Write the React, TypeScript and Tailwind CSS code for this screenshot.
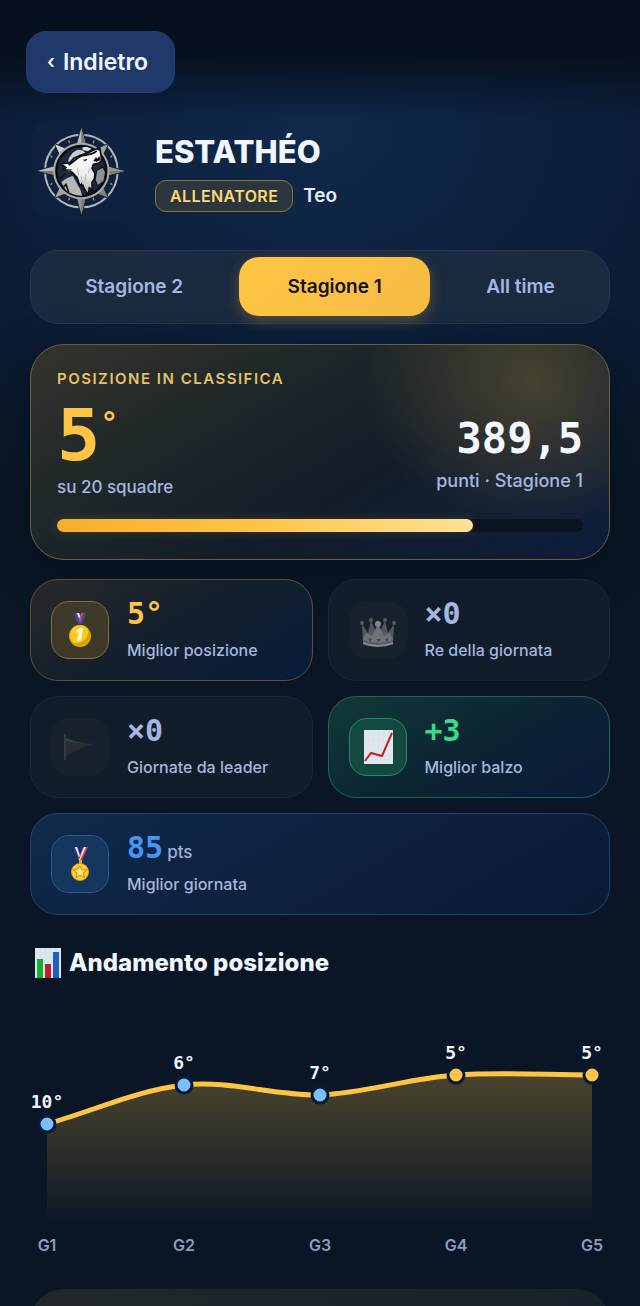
import { useState } from "react";
import type { ReactNode } from "react";
import clsx from "clsx";

const SEASONS = ["Stagione 2", "Stagione 1", "All time"];

type Tone = "gold" | "green" | "blue" | "off";

const cardTone: Record<Tone, string> = {
  gold: "border-[#5d512f] bg-linear-150 from-[#28292a] via-[#14202d] via-45% to-[#091b38]",
  green: "border-[#1f6557] bg-linear-150 from-[#103a3a] via-[#0d2433] via-50% to-[#0b1b38]",
  blue: "border-[#1e4479] bg-linear-150 from-[#11294a] via-[#0e213f] via-50% to-[#0b1a33]",
  off: "border-[#1b2733] bg-[#111d2a]",
};

const iconTone: Record<Tone, string> = {
  gold: "border-[#86703a] bg-[#3f3929]",
  green: "border-[#248a69] bg-[#14493f]",
  blue: "border-[#275a97] bg-[#17365f]",
  off: "border-[#17222e] bg-[#17222e]",
};

const valueTone: Record<Tone, string> = {
  gold: "text-[#ffc443]",
  green: "text-[#35dc8c]",
  blue: "text-[#4596f7]",
  off: "text-[#a6b6e0]",
};

function TeamLogo() {
  return (
    <svg viewBox="30 24 306 306" className="size-full" role="img" aria-label="Stemma ESTATHÉO">
      <defs>
        <linearGradient id="steel" x1="0" y1="0" x2="1" y2="1">
          <stop offset="0" stopColor="#dcdcd8" />
          <stop offset="0.5" stopColor="#a3a4a2" />
          <stop offset="1" stopColor="#77797b" />
        </linearGradient>
        <linearGradient id="fur" x1="0.5" y1="0" x2="0.5" y2="1">
          <stop offset="0" stopColor="#ffffff" />
          <stop offset="0.6" stopColor="#ececeb" />
          <stop offset="1" stopColor="#a9aaaa" />
        </linearGradient>
        <clipPath id="disc">
          <circle cx="184" cy="180" r="74" />
        </clipPath>
      </defs>
      <circle cx="184" cy="180" r="109" fill="none" stroke="#b4b6b5" strokeWidth="6" />
      <path
        d="M144 87l7 5-4 6zM224 87l-7 5 4 6zM90 133l8 2-3 7zM278 133l-8 2 3 7zM90 223l8-3-3-6zM278 223l-8-3 3-6zM144 270l7-5-4-6zM224 270l-7-5 4-6z"
        fill="#b29d62"
      />
      <g fill="url(#steel)" stroke="#14202f" strokeWidth="3">
        <path d="M102 97l48 20-26 26zM267 97l-48 20 26 26zM102 263l48-20-26-26zM267 263l-48-20 26-26z" />
        <path d="M184 46l16 58h-32zM184 315l16-59h-32zM49 179l59-16v32zM320 180l-60-16v32z" />
      </g>
      <path d="M184 50v54h14zM184 311v-55h14zM55 180h53v13zM314 180h-54v13z" fill="#777a7b" />
      <circle cx="184" cy="180" r="80" fill="#10151b" stroke="#a9aaa8" strokeWidth="9" />
      <circle cx="184" cy="180" r="75" fill="#1a2942" stroke="#080a0d" strokeWidth="7" />
      <g clipPath="url(#disc)">
        <path d="M147 141l11-16 14-9 16 2 9 9-17 8-23 16-13 1z" fill="#c9cbca" />
        <path d="M186 110l14-4 17 6-13 8-14-2z" fill="#dededd" />
        <path d="M230 178l19-10 8 16-5 26-19 15-8-18z" fill="#8d9192" stroke="#10151b" strokeWidth="4" />
        <path d="M124 214l12-10 22-10 22 40 8 24h-40z" fill="#b7b8b8" />
        <path d="M119 204l17-16M128 232l10-12 8 24" fill="none" stroke="#10151b" strokeWidth="5" />
      </g>
      <path
        d="M239 110l3 16 3 22-8 8-17 4-4 12 9 16-2 16-7 10 1 26-9-10-3 22-12-18-7-18-6 10-9-27-17-17-9-3-15-4 8-5-16-12 27-2 12-14 20-9 22-7 20-10z"
        fill="url(#fur)"
        stroke="#0b0e12"
        strokeWidth="5"
        strokeLinejoin="round"
      />
      <path d="M148 160c14-8 22-20 38-26 14-5 30-1 42-13" fill="none" stroke="#0b0e12" strokeWidth="6" strokeLinecap="round" />
      <path d="M134 175l23 0-8 9z" fill="#3c4146" />
      <path d="M188 146l15-2-7 7z" fill="#0b0e12" />
      <path d="M220 150l8-12 4 5 6-8 4 12-12 5z" fill="#0b0e12" />
      <path d="M230 116l9-6 2 11z" fill="#15191e" />
      <path d="M172 172l4 20M184 196l4 24M198 190l-3 22M209 172l-4 16" fill="none" stroke="#b3b5b6" strokeWidth="3" />
    </svg>
  );
}

function GoldMedal() {
  return (
    <svg viewBox="0 0 36 36" className="size-9" aria-hidden="true">
      <path d="M12 1h3l5 11h-4z" fill="#3b4db0" />
      <path d="M15 1h2l3 8-1 3z" fill="#f1f3fb" />
      <path d="M24 1h-3l-5 11h4z" fill="#3b4db0" />
      <path d="M21 1h-2l-2 6 1 4z" fill="#e34553" />
      <circle cx="18" cy="24" r="11" fill="#e0a70c" />
      <circle cx="18" cy="23" r="10" fill="#f8cb22" />
      <path d="M26 17a10 10 0 0 1-14 14 12 12 0 0 0 14-14z" fill="#dc9f08" />
      <path d="M14 19l4-3h3l-2 13h-4l2-9-3 1z" fill="#fff6ca" />
    </svg>
  );
}

function StarMedal() {
  return (
    <svg viewBox="0 0 36 36" className="size-9" aria-hidden="true">
      <path d="M11 1h5l4 13h-3z" fill="#28469b" />
      <path d="M13 1h2l4 12-1 1z" fill="#f5f5fb" />
      <path d="M26 1h-5l-5 13h4z" fill="#d84253" />
      <path d="M24 1h-2l-5 13h1z" fill="#f5f5fb" />
      <path d="M17 14h3v4h-3z" fill="#e7ae24" />
      <circle cx="18" cy="26" r="9" fill="#dba313" />
      <circle cx="18" cy="26" r="8" fill="#f8d03a" />
      <path d="M18 20l2 4 5 0-4 3 2 5-5-3-4 3 1-5-4-3 5-1z" fill="#ffe673" stroke="#c88b0b" strokeWidth="1" />
    </svg>
  );
}

function Crown() {
  return (
    <svg viewBox="0 0 36 36" className="size-9" aria-hidden="true">
      <g fill="#54585e">
        <path d="M3 31L2 12l6 9 3-12 5 11h4l5-11 3 12 6-9-1 19q-15 6-30 0z" />
        <circle cx="2" cy="11" r="2" />
        <circle cx="11" cy="8" r="2" />
        <circle cx="25" cy="8" r="2" />
        <circle cx="34" cy="11" r="2" />
      </g>
      <path d="M3 28l3-7 6 3 6-12 6 12 6-3 3 7q-15 6-30 0z" fill="#6f7378" />
      <circle cx="18" cy="12" r="3" fill="#83868b" />
      <path d="M3 31q15 6 30 0" stroke="#85888c" strokeWidth="2" fill="none" />
      <path d="M8 26l4 1-2 3zM16 27h5l-2 3zM25 27l4-1-2 4z" fill="#44484e" />
    </svg>
  );
}

function Flag() {
  return (
    <svg viewBox="0 0 36 36" className="size-9" aria-hidden="true">
      <path d="M3 5v26" stroke="#505458" strokeWidth="1" />
      <path d="M4 9q10 5 27 6-13 4-27 12z" fill="#2a2d30" />
      <path d="M4 9q10 5 27 6-14 0-27-3z" fill="#3c3f42" />
    </svg>
  );
}

function Rising() {
  return (
    <svg viewBox="0 0 36 36" className="size-9" aria-hidden="true">
      <path d="M4 1h29v34H4z" fill="#e1e7ee" />
      <path d="M9 1v34M14 1v34M19 1v34M24 1v34M29 1v34M4 6h29M4 11h29M4 16h29M4 21h29M4 26h29M4 31h29" stroke="#dae1ea" strokeWidth="1" />
      <path d="M5 32l6-8 11 3L32 4" fill="none" stroke="#c51e25" strokeWidth="2" />
    </svg>
  );
}

function Bars() {
  return (
    <svg viewBox="0 0 26 30" className="h-[30px] w-[26px]" aria-hidden="true">
      <path d="M0 0h26v30H0z" fill="#dee7f1" />
      <path d="M0 5h26M0 10h26M0 15h26M0 20h26M5 0v30M10 0v30M15 0v30M20 0v30" stroke="#d4deea" strokeWidth="1" />
      <path d="M2 11h6v19H2z" fill="#12b32a" />
      <path d="M10 16h6v14h-6z" fill="#b9202c" />
      <path d="M18 4h6v26h-6z" fill="#1d5fc4" />
    </svg>
  );
}

interface StatProps {
  tone: Tone;
  icon: ReactNode;
  value: string;
  unit?: string;
  label: string;
  wide?: boolean;
}

function StatCard({ tone, icon, value, unit, label, wide }: StatProps) {
  return (
    <div className={clsx("flex h-[102px] items-center gap-[18px] rounded-[28px] border px-5", cardTone[tone], wide && "col-span-2")}>
      <div className={clsx("flex size-[58px] shrink-0 items-center justify-center rounded-[18px] border", iconTone[tone])}>
        {icon}
      </div>
      <div className="min-w-0 pt-1">
        <p className={clsx("flex items-baseline font-['DejaVu_Sans_Mono',monospace] text-[30px] leading-9 font-bold", valueTone[tone])}>
          {value}
          {unit && <span className="ml-1 font-['Inter',sans-serif] text-[17px] leading-6 font-medium text-[#9fafd8]">{unit}</span>}
        </p>
        <p className="text-[16px] leading-9 font-medium whitespace-nowrap text-[#a6b6dc]">{label}</p>
      </div>
    </div>
  );
}

const points = [
  { x: 17, y: 125, pos: "10°", day: "G1" },
  { x: 154, y: 86, pos: "6°", day: "G2" },
  { x: 290, y: 96, pos: "7°", day: "G3" },
  { x: 426, y: 76, pos: "5°", day: "G4" },
  { x: 562, y: 76, pos: "5°", day: "G5" },
];

const LINE = "M17 125C63 112 108 91 154 86C199 81 245 97 290 96C335 94 381 79 426 76C471 73 517 76 562 76";

function PositionChart() {
  return (
    <svg viewBox="0 0 580 270" className="block h-auto w-full overflow-visible" role="img" aria-label="Andamento posizione">
      <defs>
        <linearGradient id="area" gradientUnits="userSpaceOnUse" x1="0" y1="72" x2="0" y2="222">
          <stop offset="0" stopColor="#ffc443" stopOpacity="0.27" />
          <stop offset="0.9" stopColor="#ffc443" stopOpacity="0.04" />
          <stop offset="1" stopColor="#ffc443" stopOpacity="0" />
        </linearGradient>
      </defs>
      <path d={`${LINE}V222H17Z`} fill="url(#area)" />
      <path d={LINE} fill="none" stroke="#ffc443" strokeWidth="5" />
      {points.map((p) => (
        <g key={p.day} textAnchor="middle">
          <circle cx={p.x} cy={p.y} r="8" fill={p.pos === "5°" ? "#ffc443" : "#7abfff"} stroke="#061a38" strokeWidth="3" />
          <text x={p.x} y={p.y - 16} className="fill-[#f0f5ff] font-['DejaVu_Sans_Mono',monospace] text-[18px] font-bold">
            {p.pos}
          </text>
          <text x={p.x} y="252" className="fill-[#8c9dbf] font-['Inter',sans-serif] text-[16px] font-semibold">
            {p.day}
          </text>
        </g>
      ))}
    </svg>
  );
}

export default function App() {
  const [season, setSeason] = useState("Stagione 1");

  return (
    <div className="h-screen overflow-hidden bg-[#0a1625] bg-[radial-gradient(90%_440px_at_50%_130px,#10294a_0%,#0c1f3a_50%,#0a162500_100%)] font-['Inter',sans-serif] text-[#f0f5ff]">
      <header className="bg-linear-to-b from-[#060f1d] from-45% to-transparent px-[26px] pt-[31px] pb-[25px]">
        <button className="flex h-[62px] items-center gap-2 rounded-[20px] border border-[#213d70] bg-[#20396b] pr-[26px] pl-5 text-[23px] font-semibold">
          <span className="text-[19px]">‹</span>
          Indietro
        </button>
      </header>

      <main className="px-[30px]">
        <section className="flex h-[104px] items-center gap-[23px]">
          <div className="size-[102px] shrink-0 rounded-[24px] bg-[#11254566]">
            <TeamLogo />
          </div>
          <div className="pt-1">
            <h1 className="text-[31px] leading-10 font-extrabold">ESTATHÉO</h1>
            <div className="mt-2 flex items-center gap-[10px]">
              <span className="flex h-8 items-center rounded-[11px] border border-[#847540] bg-[#2b363e] px-[14px] text-[16px] font-semibold tracking-wide text-[#ffd86e]">
                ALLENATORE
              </span>
              <span className="text-[19px] font-semibold text-[#e5edfc]">Teo</span>
            </div>
          </div>
        </section>

        <div className="mt-7 flex h-[74px] gap-2 rounded-[28px] border border-[#24364d] bg-[#1a2a3f] px-1.5 pt-1.5 pb-[7px]">
          {SEASONS.map((s) => (
            <button
              key={s}
              onClick={() => setSeason(s)}
              className={clsx(
                "flex-auto rounded-[20px] pt-0.5 text-[19px] font-semibold",
                s === season
                  ? "bg-linear-135 from-[#ffc543] to-[#f6bb43] text-[#111318] shadow-[0_5px_14px_#ffc44340]"
                  : "text-[#a6b6e0]",
              )}
            >
              {s}
            </button>
          ))}
        </div>

        <section className="mt-5 h-[216px] rounded-[34px] border border-[#6a6040] bg-[radial-gradient(170px_150px_at_87%_18%,#ffc44338,transparent),linear-gradient(150deg,#35342c_0%,#1f2829_30%,#131d2a_60%,#0d1d3b_100%)] px-[26px] pt-[22px] shadow-[0_8px_36px_#030b1a80]">
          <h2 className="text-[15px] leading-6 font-semibold tracking-widest text-[#e4c267]">POSIZIONE IN CLASSIFICA</h2>
          <div className="mt-2 flex items-end justify-between">
            <div>
              <p className="flex font-['DejaVu_Sans_Mono',monospace] font-bold text-[#ffc443]">
                <span className="text-[72px] leading-[72px]">5</span>
                <span className="text-[30px] leading-[50px]">°</span>
              </p>
              <p className="text-[17px] leading-8 font-medium text-[#a6b6e0]">su 20 squadre</p>
            </div>
            <div className="pb-1.5 text-right">
              <p className="font-['DejaVu_Sans_Mono',monospace] text-[42px] leading-[52px] font-bold text-[#f3f7ff]">389,5</p>
              <p className="text-[18px] leading-8 font-medium text-[#a6b6e0]">punti · Stagione 1</p>
            </div>
          </div>
          <div className="mt-4 h-[13px] rounded-full bg-[#0a1420]">
            <div className="h-full w-[79%] rounded-full bg-linear-to-r from-[#f8ad2d] via-[#ffc543] to-[#ffe196] shadow-[0_0_12px_#ffc44326]" />
          </div>
        </section>

        <section className="mt-[19px] grid grid-cols-2 gap-[15px]">
          <StatCard tone="gold" icon={<GoldMedal />} value="5°" label="Miglior posizione" />
          <StatCard tone="off" icon={<Crown />} value="×0" label="Re della giornata" />
          <StatCard tone="off" icon={<Flag />} value="×0" label="Giornate da leader" />
          <StatCard tone="green" icon={<Rising />} value="+3" label="Miglior balzo" />
          <StatCard tone="blue" icon={<StarMedal />} value="85" unit="pts" label="Miglior giornata" wide />
        </section>

        <h2 className="mt-8 flex h-8 items-center gap-2 pl-[5px] text-[24px] font-extrabold">
          <Bars />
          Andamento posizione
        </h2>
        <div className="mt-5">
          <PositionChart />
        </div>
        <div className="mt-5 h-20 rounded-[34px] bg-linear-to-r from-[#22282a] to-[#18222c]" />
      </main>
    </div>
  );
}
